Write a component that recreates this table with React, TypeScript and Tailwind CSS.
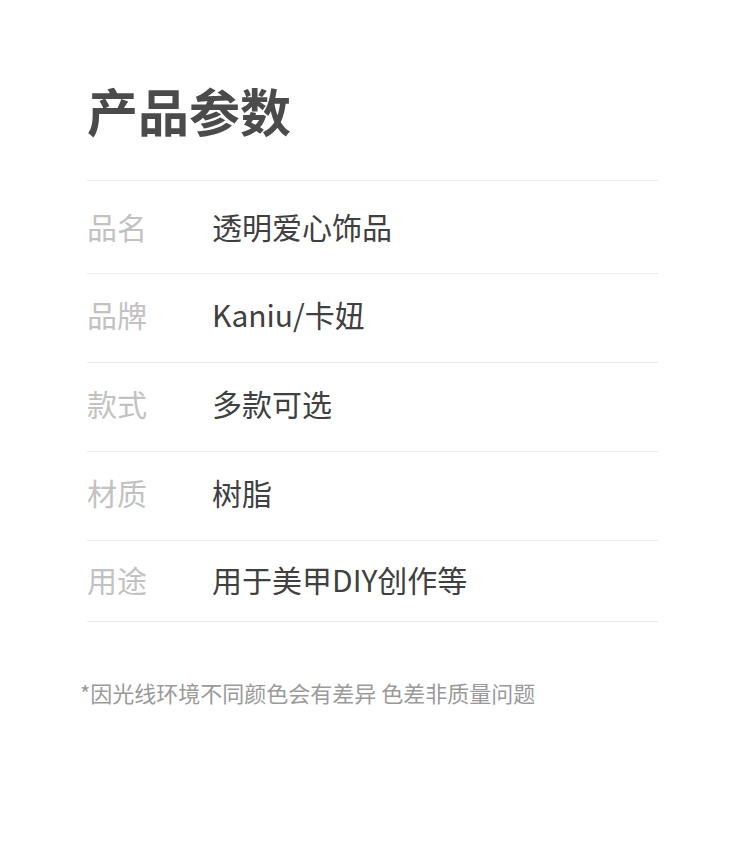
const rows = [
  { label: "品名", value: "透明爱心饰品", h: "h-[93px] pb-[2px]" },
  { label: "品牌", value: "Kaniu/卡妞", h: "h-[89px] pb-[7px]" },
  { label: "款式", value: "多款可选", h: "h-[89px] pb-[7px]" },
  { label: "材质", value: "树脂", h: "h-[89px] pb-[8px]" },
  { label: "用途", value: "用于美甲DIY创作等", h: "h-[81px] pb-[4px]" },
];

export default function App() {
  return (
    <div
      className="w-[750px] h-[849px] bg-white"
      style={{ fontFamily: '"Noto Sans CJK SC", "Noto Sans", sans-serif' }}
    >
      <div className="px-[87px] pt-[85px]">
        <h1 className="text-[51px] leading-none font-bold text-[#4b4b4b]">
          产品参数
        </h1>
        <div className="mt-[44px] border-t border-[#ececec] w-[571px]">
          {rows.map((r) => (
            <div
              key={r.label}
              className={`flex items-center border-b border-[#ececec] ${r.h}`}
            >
              <span className="w-[125px] text-[30px] text-[#c2c2c2]">{r.label}</span>
              <span className="text-[30px] text-[#404040]">{r.value}</span>
            </div>
          ))}
        </div>
      </div>
      <p className="mt-[54px] pl-[80px] text-[22px] text-[#9a9a9a]">
        *因光线环境不同颜色会有差异 色差非质量问题
      </p>
    </div>
  );
}
